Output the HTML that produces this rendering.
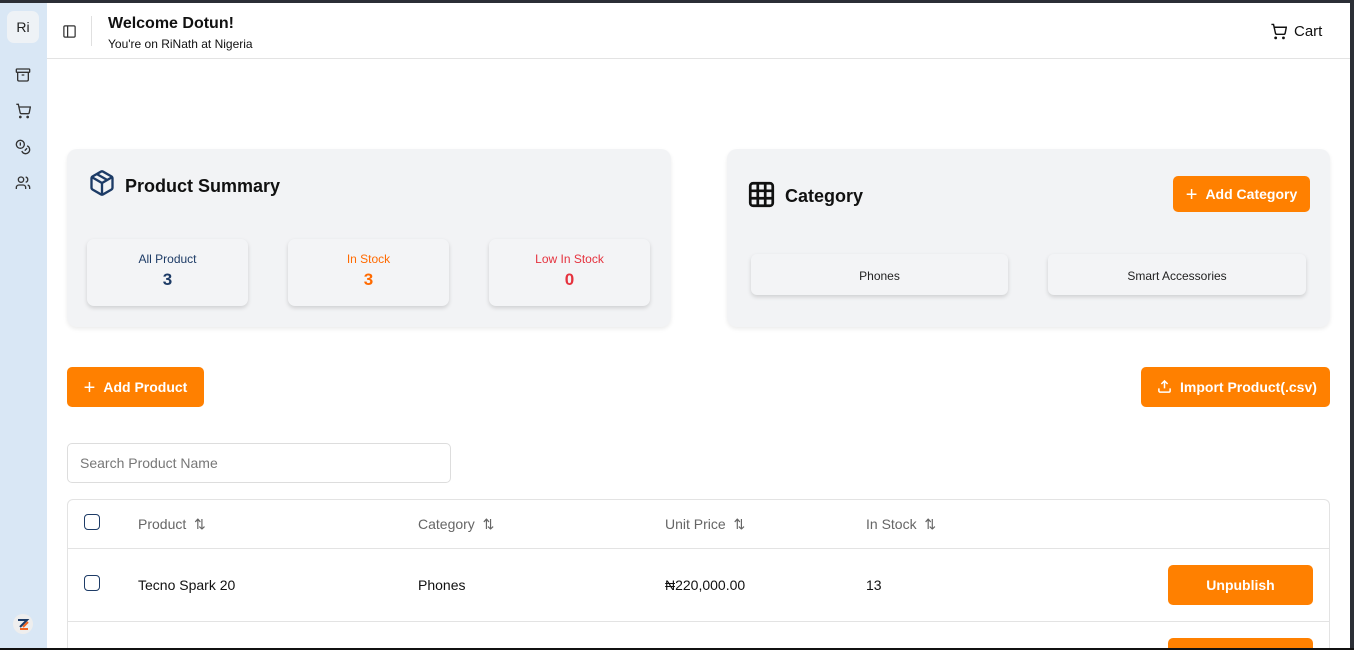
<!DOCTYPE html>
<html><head><meta charset="utf-8"><style>
*{box-sizing:border-box;margin:0;padding:0}
html,body{width:1354px;height:650px;overflow:hidden}
body{background:#2b2f36;font-family:"Liberation Sans",sans-serif;position:relative}
.frame{position:absolute;left:0;top:3px;width:1350px;height:645px;background:#fff;overflow:hidden}
.bottom{position:absolute;left:0;top:648px;width:1354px;height:2px;background:#111}
.side{position:absolute;left:0;top:0;width:47px;height:645px;background:#d9e7f5}
.logo{position:absolute;left:7px;top:8px;width:32px;height:32px;border-radius:7px;background:#eef2f6;font-size:14px;color:#222;text-align:center;line-height:32px}
.ic{position:absolute;left:15px}
.hdr{position:absolute;left:47px;top:0;right:0;height:56px;border-bottom:1px solid #e3e3e3}
.t{position:absolute}
.card{position:absolute;background:#f2f3f5;border-radius:10px;box-shadow:0 2px 4px rgba(0,0,0,.08)}
.stat{position:absolute;top:90px;width:161px;height:67px;background:#f3f4f6;border-radius:7px;box-shadow:0 2px 4px rgba(0,0,0,.15);text-align:center}
.stat .l{font-size:12px;margin-top:13px}
.stat .n{font-size:17px;font-weight:bold;margin-top:4px}
.cat{position:absolute;top:105px;height:41px;background:#f3f4f6;border-radius:6px;box-shadow:0 2px 4px rgba(0,0,0,.15);font-size:12px;color:#222;text-align:center;line-height:45px}
.btn{position:absolute;background:#ff8000;color:#fff;border-radius:5px;font-weight:bold;font-size:14px}
.th{position:absolute;top:513px;font-size:14px;color:#666}
.td{position:absolute;top:574px;font-size:14px;color:#111}
.cb{position:absolute;left:84px;width:16px;height:16px;border:1.5px solid #1d3b66;border-radius:4px}
</style></head><body>
<div class="frame">
<div class="side">
 <div class="logo">Ri</div>
 <svg class="ic" style="top:64px" width="16" height="16" viewBox="0 0 24 24" fill="none" stroke="#333" stroke-width="2"><rect x="2" y="3" width="20" height="5" rx="1"/><path d="M4 8v11a2 2 0 0 0 2 2h12a2 2 0 0 0 2-2V8M10 12h4"/></svg>
 <svg class="ic" style="top:100px" width="16" height="16" viewBox="0 0 24 24" fill="none" stroke="#333" stroke-width="2"><circle cx="8" cy="21" r="1"/><circle cx="19" cy="21" r="1"/><path d="M2 2h3l2.7 12.4a2 2 0 0 0 2 1.6h9.7a2 2 0 0 0 2-1.6L23 6H6"/></svg>
 <svg class="ic" style="top:136px" width="16" height="16" viewBox="0 0 24 24" fill="none" stroke="#333" stroke-width="2"><circle cx="8" cy="8" r="6"/><path d="M18.1 10.4A6 6 0 1 1 10.3 18M7 6h1v4M16.7 13.9l.7.7-2.8 2.8"/></svg>
 <svg class="ic" style="top:172px" width="16" height="16" viewBox="0 0 24 24" fill="none" stroke="#333" stroke-width="2"><path d="M16 21v-2a4 4 0 0 0-4-4H6a4 4 0 0 0-4 4v2"/><circle cx="9" cy="7" r="4"/><path d="M22 21v-2a4 4 0 0 0-3-3.9M16 3.1a4 4 0 0 1 0 7.8"/></svg>
 <div style="position:absolute;left:13px;top:611px;width:20px;height:20px;border-radius:50%;background:#eee"></div>
 <svg style="position:absolute;left:16px;top:614px" width="14" height="14" viewBox="0 0 14 14" fill="none" stroke-width="2"><path d="M2 3h9L4 10" stroke="#1d3b66"/><path d="M4 12h8M12 5l-5 5" stroke="#f26522"/></svg>
</div>
<div class="hdr">
 <svg style="position:absolute;left:15px;top:21px" width="15" height="15" viewBox="0 0 24 24" fill="none" stroke="#333" stroke-width="2"><rect x="3" y="3" width="18" height="18" rx="2"/><path d="M9 3v18"/></svg>
 <div style="position:absolute;left:44px;top:13px;width:1px;height:30px;background:#e0e0e0"></div>
 <div class="t" style="left:61px;top:12px;font-size:16px;font-weight:bold;color:#111">Welcome Dotun!</div>
 <div class="t" style="left:61px;top:34px;font-size:12px;color:#111">You're on RiNath at Nigeria</div>
 <svg style="position:absolute;left:1223px;top:20px" width="17" height="17" viewBox="0 0 24 24" fill="none" stroke="#111" stroke-width="2"><circle cx="8" cy="21" r="1"/><circle cx="19" cy="21" r="1"/><path d="M2 2h3l2.7 12.4a2 2 0 0 0 2 1.6h9.7a2 2 0 0 0 2-1.6L23 6H6"/></svg>
 <div class="t" style="left:1247px;top:20px;font-size:15px;color:#111">Cart</div>
</div>

<div class="card" style="left:67px;top:146px;width:604px;height:178px">
 <svg style="position:absolute;left:21px;top:20px" width="28" height="28" viewBox="0 0 24 24" fill="none" stroke="#1d3b66" stroke-width="2"><path d="M21 8a2 2 0 0 0-1-1.7l-7-4a2 2 0 0 0-2 0l-7 4A2 2 0 0 0 3 8v8a2 2 0 0 0 1 1.7l7 4a2 2 0 0 0 2 0l7-4a2 2 0 0 0 1-1.7Z"/><path d="M3.3 7 12 12l8.7-5M12 22V12M7.5 4.3l9 5.1"/></svg>
 <div class="t" style="left:58px;top:27px;font-size:18px;font-weight:bold;color:#111">Product Summary</div>
 <div class="stat" style="left:20px"><div class="l" style="color:#1d3b66">All Product</div><div class="n" style="color:#1d3b66">3</div></div>
 <div class="stat" style="left:221px"><div class="l" style="color:#ff6a00">In Stock</div><div class="n" style="color:#ff6a00">3</div></div>
 <div class="stat" style="left:422px"><div class="l" style="color:#e5323e">Low In Stock</div><div class="n" style="color:#e5323e">0</div></div>
</div>

<div class="card" style="left:727px;top:146px;width:603px;height:178px">
 <svg style="position:absolute;left:21px;top:32px" width="27" height="27" viewBox="0 0 24 24" fill="none" stroke="#111" stroke-width="2.4"><rect x="2" y="2" width="20" height="20" rx="2.5"/><path d="M2 8.7h20M2 15.3h20M8.7 2v20M15.3 2v20"/></svg>
 <div class="t" style="left:58px;top:37px;font-size:18px;font-weight:bold;color:#111">Category</div>
 <div class="btn" style="left:446px;top:27px;width:137px;height:36px;line-height:36px;text-align:center"><span style="font-weight:normal;font-size:20px;vertical-align:-2px;margin-right:8px">+</span>Add Category</div>
 <div class="cat" style="left:24px;width:257px">Phones</div>
 <div class="cat" style="left:321px;width:258px">Smart Accessories</div>
</div>

<div class="btn" style="left:67px;top:364px;width:137px;height:40px;line-height:40px;text-align:center"><span style="font-weight:normal;font-size:20px;vertical-align:-2px;margin-right:8px">+</span>Add Product</div>
<div class="btn" style="left:1141px;top:364px;width:189px;height:40px;line-height:40px;padding-left:16px">
 <svg style="vertical-align:-2px;margin-right:8px" width="15" height="15" viewBox="0 0 24 24" fill="none" stroke="#fff" stroke-width="2.4"><path d="M21 15v4a2 2 0 0 1-2 2H5a2 2 0 0 1-2-2v-4M17 8l-5-5-5 5M12 3v12"/></svg>Import Product(.csv)</div>

<div style="position:absolute;left:67px;top:440px;width:384px;height:40px;border:1px solid #ddd;border-radius:5px;font-size:14px;color:#777;padding-left:12px;line-height:38px">Search Product Name</div>

<div style="position:absolute;left:67px;top:496px;width:1263px;height:152px;border:1px solid #e3e3e3;border-bottom:none;border-radius:6px 6px 0 0"></div>
<div style="position:absolute;left:68px;top:545px;width:1261px;height:1px;background:#e3e3e3"></div>
<div style="position:absolute;left:68px;top:618px;width:1261px;height:1px;background:#e3e3e3"></div>
<div class="cb" style="top:511px"></div>
<div class="th" style="left:138px">Product &nbsp;⇅</div>
<div class="th" style="left:418px">Category &nbsp;⇅</div>
<div class="th" style="left:665px">Unit Price &nbsp;⇅</div>
<div class="th" style="left:866px">In Stock &nbsp;⇅</div>
<div class="cb" style="top:572px"></div>
<div class="td" style="left:138px">Tecno Spark 20</div>
<div class="td" style="left:418px">Phones</div>
<div class="td" style="left:665px">₦220,000.00</div>
<div class="td" style="left:866px">13</div>
<div class="btn" style="left:1168px;top:562px;width:145px;height:40px;line-height:40px;text-align:center">Unpublish</div>
<div class="btn" style="left:1168px;top:635px;width:145px;height:10px;border-radius:5px 5px 0 0"></div>
</div>
<div class="bottom"></div>
</body></html>
